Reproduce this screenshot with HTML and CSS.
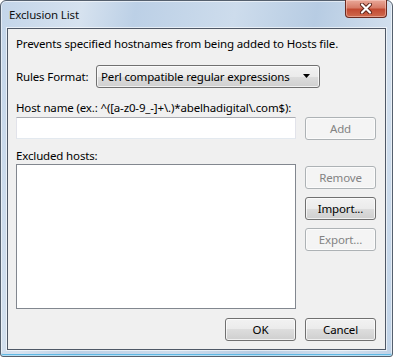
FILE: index.html
```html
<!DOCTYPE html>
<html lang="en">
<head>
    <meta charset="UTF-8">
    <meta name="viewport" content="width=device-width, initial-scale=1.0">
    <title>Exclusion List</title>
    <link rel="stylesheet" href="styles.css">
</head>
<body>
    <div class="window">
        <div class="titlebar">
            <span class="title">Exclusion List</span>
            <button class="close" type="button" aria-label="Close">
                <svg width="14" height="11" viewBox="0 0 14 11">
                    <path d="M3 1.5 L11 9.5 M11 1.5 L3 9.5" stroke="#5b231a" stroke-width="4" stroke-linecap="round"/>
                    <path d="M3 1.5 L11 9.5 M11 1.5 L3 9.5" stroke="#ffffff" stroke-width="2.2" stroke-linecap="round"/>
                </svg>
            </button>
        </div>

        <div class="client">
            <div class="intro">Prevents specified hostnames from being added to Hosts file.</div>

            <div class="format-row">
                <label class="format-label">Rules Format:</label>
                <div class="combo">
                    <span>Perl compatible regular expressions</span>
                    <svg class="combo-arrow" width="8" height="5" viewBox="0 0 8 5">
                        <path d="M0 0 H7 L3.5 4 Z" fill="#000"/>
                    </svg>
                </div>
            </div>

            <div class="field-label host-label">Host name (ex.: ^([a-z0-9_-]+\.)*abelhadigital\.com$):</div>
            <div class="host-row">
                <input class="textbox" type="text">
                <button class="btn" type="button" disabled>Add</button>
            </div>

            <div class="field-label list-label">Excluded hosts:</div>
            <div class="list-area">
                <div class="listbox"></div>
                <div class="side-buttons">
                    <button class="btn" type="button" disabled>Remove</button>
                    <button class="btn" type="button">Import...</button>
                    <button class="btn" type="button" disabled>Export...</button>
                </div>
            </div>

            <div class="footer">
                <button class="btn" type="button">OK</button>
                <button class="btn" type="button">Cancel</button>
            </div>
        </div>
    </div>
</body>
</html>
```

FILE: styles.css
```css
body {
    margin: 0;
    padding: 0;
    background-color: #ffffff;
    font-family: "Noto Sans", "Open Sans", sans-serif;
    font-size: 11.5px;
    letter-spacing: -0.15px;
    color: #000;
}
.window {
    width: 393px;
    height: 357px;
    box-sizing: border-box;
    display: flex;
    flex-direction: column;
    border: 1px solid #55606e;
    border-radius: 6px 6px 3px 3px;
    background: linear-gradient(100deg, #c3d5e9 0%, #d6e2ef 18%, #bcd0e6 30%, #cddcec 52%, #b7cce3 70%, #d3e0ee 88%, #bfd2e7 100%);
    box-shadow: inset 0 0 0 1px rgba(255, 255, 255, 0.55), inset 0 -2px 0 #5fb8e4;
}
.titlebar {
    height: 27px;
    display: flex;
    align-items: flex-start;
    padding-left: 8px;
}
.title {
    line-height: 27px;
    color: #111;
}
.close {
    margin: -1px 5px 0 auto;
    width: 42px;
    height: 18px;
    padding: 0;
    display: flex;
    align-items: center;
    justify-content: center;
    border: 1px solid #6b2a20;
    border-top: none;
    border-radius: 0 0 4px 4px;
    background: linear-gradient(#e9a899 0%, #d77c68 45%, #c24a32 55%, #cf6a4e 100%);
    box-shadow: inset 0 0 0 1px rgba(255, 220, 210, 0.45);
}
.client {
    flex: 1;
    margin: 0 6px 6px 6px;
    display: flex;
    flex-direction: column;
    padding: 7px 9px 8px 8px;
    background-color: #f0f0f0;
    border: 1px solid #4f5866;
    box-shadow: 0 0 0 1px rgba(255, 255, 255, 0.6);
}
.intro,
.field-label {
    line-height: 15px;
}
.format-row {
    margin-top: 14px;
    display: flex;
    align-items: center;
    height: 23px;
}
.format-label {
    width: 80px;
}
.combo {
    width: 224px;
    height: 23px;
    box-sizing: border-box;
    display: flex;
    align-items: center;
    justify-content: space-between;
    padding: 0 8px 0 4px;
    white-space: nowrap;
    border: 1px solid #707070;
    border-radius: 3px;
    background: linear-gradient(#f2f2f2 0%, #ebebeb 50%, #dddddd 50%, #cfcfcf 100%);
    box-shadow: inset 0 0 0 1px rgba(255, 255, 255, 0.7);
}
.host-label {
    margin-top: 12px;
}
.host-row {
    margin-top: 2px;
    display: flex;
    align-items: flex-start;
    gap: 9px;
}
.textbox {
    width: 280px;
    height: 22px;
    box-sizing: border-box;
    margin: 0;
    border: 1px solid #e2e3ea;
    border-top-color: #abadb3;
    border-bottom-color: #e3e9ef;
    background: #fff;
}
.btn {
    width: 71px;
    height: 23px;
    box-sizing: border-box;
    padding: 0;
    font-family: inherit;
    font-size: 11.5px;
    letter-spacing: -0.15px;
    color: #000;
    border: 1px solid #707070;
    border-radius: 3px;
    background: linear-gradient(#f2f2f2 0%, #ebebeb 50%, #dddddd 50%, #cfcfcf 100%);
    box-shadow: inset 0 0 0 1px rgba(255, 255, 255, 0.7);
}
.btn:disabled {
    color: #838383;
    border-color: #adb2b5;
    background: #f4f4f4;
    box-shadow: inset 0 0 0 1px #fbfbfb;
}
.list-label {
    margin-top: 8px;
}
.list-area {
    margin-top: 1px;
    display: flex;
    gap: 9px;
}
.listbox {
    width: 280px;
    height: 145px;
    box-sizing: border-box;
    border: 1px solid #82878f;
    background: #fff;
}
.side-buttons {
    padding-top: 2px;
    display: flex;
    flex-direction: column;
    gap: 8px;
}
.footer {
    margin-top: auto;
    display: flex;
    justify-content: flex-end;
    gap: 9px;
}
```
